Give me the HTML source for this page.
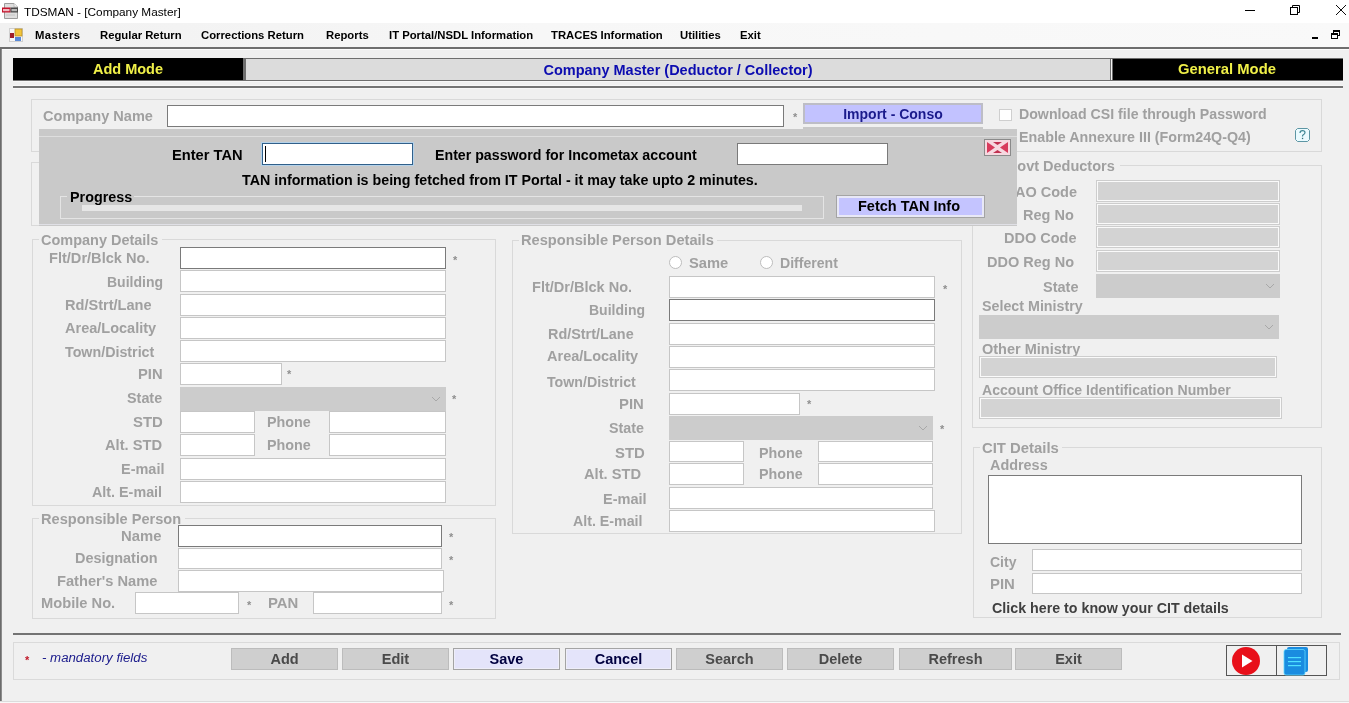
<!DOCTYPE html>
<html><head><meta charset="utf-8"><title>TDSMAN - [Company Master]</title>
<style>
html,body{margin:0;padding:0;}
body{width:1349px;height:703px;position:relative;overflow:hidden;background:#f0f0f0;font-family:"Liberation Sans", sans-serif;}
body>*{position:absolute;box-sizing:border-box;white-space:nowrap;}
span{display:block;will-change:transform;}
</style></head><body>
<div style="left:0px;top:0px;width:1349px;height:23px;background:#ffffff;"></div>
<svg style="left:1px;top:2px" width="18" height="18" viewBox="0 0 18 18"><path d="M3.5 1.5 H13 L16.5 5 V16.5 H3.5 Z" fill="#dedede" stroke="#9c9c9c" stroke-width="1"/><path d="M13 1.5 V5 H16.5" fill="#f4f4f4" stroke="#b0b0b0" stroke-width="0.8"/><rect x="1" y="5.5" width="8.5" height="5" fill="#c4142c"/><rect x="9.5" y="5.5" width="7.5" height="5" fill="#4a4a4a"/><rect x="2" y="7" width="6.5" height="2.2" fill="#f0b8c0"/><rect x="10.5" y="7" width="5.5" height="2.2" fill="#b8b8b8"/><rect x="5" y="12.5" width="9" height="1" fill="#c4c4c4"/></svg>
<span style="left:24px;top:4.9px;font-size:11.8px;line-height:14px;font-weight:400;color:#000000;">TDSMAN - [Company Master]</span>
<div style="left:1245px;top:10px;width:10px;height:1px;background:#000;"></div>
<svg style="left:1289px;top:4px" width="12" height="12"><rect x="1.5" y="3.5" width="7" height="7" fill="none" stroke="#000" stroke-width="1"/><path d="M3.5 3.5 V1.5 H10.5 V8.5 H8.5" fill="none" stroke="#000" stroke-width="1"/></svg>
<svg style="left:1335px;top:4px" width="12" height="12"><path d="M1 1 L11 11 M11 1 L1 11" stroke="#000" stroke-width="0.95"/></svg>
<div style="left:0px;top:23px;width:1349px;height:24px;background:linear-gradient(to right,#f1f1f1,#f7f7f7 40%,#f9f9f9);"></div>
<div style="left:0px;top:47px;width:1349px;height:2px;background:#6e6e6e;"></div>
<div style="left:2px;top:49px;width:1347px;height:1px;background:#fbfbfb;"></div>
<svg style="left:9px;top:28px" width="14" height="14" viewBox="0 0 14 14"><rect x="0.5" y="0.5" width="13" height="13" fill="#f8f8f8" stroke="#d0d0d0" stroke-width="1"/><rect x="6" y="1" width="7" height="7" fill="#f2c53a" stroke="#b89028" stroke-width="0.8"/><rect x="1" y="5" width="4" height="5" fill="#a0202c"/><rect x="6" y="9" width="6" height="4" fill="#5a8ad8"/></svg>
<span style="left:35px;top:27.3px;width:51px;font-size:11.3px;line-height:16px;font-weight:700;color:#000;letter-spacing:0.4px;">Masters</span>
<span style="left:100px;top:27.3px;width:87px;font-size:11.3px;line-height:16px;font-weight:700;color:#000;">Regular Return</span>
<span style="left:201px;top:27.3px;width:111px;font-size:11.3px;line-height:16px;font-weight:700;color:#000;">Corrections Return</span>
<span style="left:326px;top:27.3px;width:49px;font-size:11.3px;line-height:16px;font-weight:700;color:#000;">Reports</span>
<span style="left:389px;top:27.3px;width:148px;font-size:11.3px;line-height:16px;font-weight:700;color:#000;">IT Portal/NSDL Information</span>
<span style="left:551px;top:27.3px;width:115px;font-size:11.3px;line-height:16px;font-weight:700;color:#000;">TRACES Information</span>
<span style="left:680px;top:27.3px;width:46px;font-size:11.3px;line-height:16px;font-weight:700;color:#000;">Utilities</span>
<span style="left:740px;top:27.3px;width:25px;font-size:11.3px;line-height:16px;font-weight:700;color:#000;">Exit</span>
<div style="left:1312px;top:37px;width:6px;height:2px;background:#000;"></div>
<svg style="left:1330px;top:29px" width="12" height="12" shape-rendering="crispEdges"><rect x="3" y="1" width="7" height="2" fill="#000"/><rect x="9" y="1" width="1" height="6" fill="#000"/><rect x="8" y="6" width="2" height="1" fill="#000"/><rect x="3" y="3" width="1" height="1" fill="#000"/><rect x="1" y="4" width="7" height="2" fill="#000"/><rect x="1" y="4" width="1" height="6" fill="#000"/><rect x="7" y="4" width="1" height="6" fill="#000"/><rect x="1" y="9" width="7" height="1" fill="#000"/></svg>
<div style="left:0px;top:49px;width:1px;height:652px;background:#6c6c6c;"></div>
<div style="left:1px;top:49px;width:1px;height:652px;background:#8c8c8c;"></div>
<div style="left:0px;top:701px;width:1349px;height:1px;background:#dcdcdc;"></div>
<div style="left:0px;top:702px;width:1349px;height:1px;background:#f8f8f8;"></div>
<div style="left:13px;top:58px;width:1330px;height:23px;background:#6e6e6e;"></div>
<div style="left:13px;top:58px;width:230px;height:22px;background:#000000;"></div>
<div style="left:246px;top:59px;width:864px;height:21px;background:#dcdcdc;"></div>
<div style="left:1111px;top:59px;width:1px;height:21px;background:#f4f4f4;"></div>
<div style="left:1113px;top:59px;width:230px;height:21px;background:#000000;"></div>
<span style="left:13px;top:60.7px;width:230px;text-align:center;font-size:14.5px;line-height:17px;font-weight:700;color:#f0f048;">Add Mode</span>
<span style="left:246px;top:61.7px;width:864px;text-align:center;font-size:14.5px;line-height:17px;font-weight:700;color:#0c0cb0;">Company Master (Deductor / Collector)</span>
<span style="left:1113px;top:60.1px;width:228px;text-align:center;font-size:14.8px;line-height:18px;font-weight:700;color:#f0f048;">General Mode</span>
<div style="left:13px;top:81px;width:1330px;height:1px;background:#f8f8f8;"></div>
<div style="left:13px;top:85px;width:1330px;height:1px;background:#f7f7f7;"></div>
<div style="left:13px;top:86px;width:1330px;height:2px;background:#747474;"></div>
<div style="left:13px;top:88px;width:1330px;height:1px;background:#f7f7f7;"></div>
<div style="left:31px;top:99px;width:1291px;height:53px;background:transparent;border:1px solid #d9d9d9;"></div>
<span style="left:43px;top:107.5px;font-size:14.55px;line-height:17px;font-weight:700;color:#a0a0a0;">Company Name</span>
<div style="left:167px;top:105px;width:617px;height:22px;background:#ffffff;border:1px solid #7a7a7a;"></div>
<span style="left:792.8px;top:111.5px;font-size:11px;line-height:11px;font-weight:700;color:#8e8e8e">*</span>
<div style="left:803px;top:103px;width:180px;height:21px;background:#c2c2ff;border:2px solid #bdbdc6;"></div>
<span style="left:803px;top:105.9px;width:180px;text-align:center;font-size:14px;line-height:17px;font-weight:700;color:#1a1a8c;">Import - Conso</span>
<div style="left:999px;top:109px;width:13px;height:12px;background:#ffffff;border:1px solid #cfcfcf;"></div>
<span style="left:1019px;top:106.1px;font-size:14.17px;line-height:17px;font-weight:700;color:#a0a0a0;">Download CSI file through Password</span>
<span style="left:1019px;top:129.1px;font-size:14.28px;line-height:17px;font-weight:700;color:#a0a0a0;">Enable Annexure III (Form24Q-Q4)</span>
<svg style="left:1295px;top:128px" width="15" height="14"><path d="M2.5 0.5 H12.5 L14.5 2.5 V11.5 L12.5 13.5 H2.5 L0.5 11.5 V2.5 Z" fill="#eafbff" stroke="#5d96a4" stroke-width="1"/><path d="M5 5 Q5 2.6 7.5 2.6 Q10 2.6 10 4.6 Q10 6 8.3 6.8 Q7.5 7.2 7.5 8.6" fill="none" stroke="#3f8896" stroke-width="1.2"/><rect x="6.9" y="9.8" width="1.3" height="1.3" fill="#2f6f7a"/></svg>
<div style="left:31px;top:162px;width:934px;height:64px;background:transparent;border:1px solid #d9d9d9;"></div>
<div style="left:972px;top:165px;width:350px;height:263px;background:transparent;border:1px solid #d9d9d9;"></div>
<div style="left:1004px;top:164px;width:116px;height:3px;background:#f0f0f0;"></div>
<span style="left:1006px;top:158.0px;font-size:14.5px;line-height:17px;font-weight:700;color:#a0a0a0;">Govt Deductors</span>
<span style="right:272px;top:184.0px;text-align:right;font-size:14.5px;line-height:17px;font-weight:700;color:#a0a0a0;">AO Code</span>
<div style="left:1096px;top:180px;width:184px;height:22px;background:#d3d3d3;border:1px solid #cdcdcd;box-shadow:inset 0 0 0 1px #fafafa;"></div>
<span style="right:275px;top:207.0px;text-align:right;font-size:14.5px;line-height:17px;font-weight:700;color:#a0a0a0;">Reg No</span>
<div style="left:1096px;top:203px;width:184px;height:22px;background:#d3d3d3;border:1px solid #cdcdcd;box-shadow:inset 0 0 0 1px #fafafa;"></div>
<span style="right:273px;top:230.0px;text-align:right;font-size:14.5px;line-height:17px;font-weight:700;color:#a0a0a0;">DDO Code</span>
<div style="left:1096px;top:226px;width:184px;height:22px;background:#d3d3d3;border:1px solid #cdcdcd;box-shadow:inset 0 0 0 1px #fafafa;"></div>
<span style="right:275px;top:254.0px;text-align:right;font-size:14.5px;line-height:17px;font-weight:700;color:#a0a0a0;">DDO Reg No</span>
<div style="left:1096px;top:250px;width:184px;height:22px;background:#d3d3d3;border:1px solid #cdcdcd;box-shadow:inset 0 0 0 1px #fafafa;"></div>
<span style="right:271px;top:279.0px;text-align:right;font-size:14.5px;line-height:17px;font-weight:700;color:#a0a0a0;">State</span>
<div style="left:1096px;top:274px;width:184px;height:24px;background:#cccccc;"></div>
<svg style="left:1265px;top:283.0px" width="10" height="6"><path d="M1 1 L5 5 L9 1" stroke="#a8a8a8" stroke-width="1" fill="none"/></svg>
<span style="left:982px;top:298.1px;font-size:14.27px;line-height:17px;font-weight:700;color:#a0a0a0;">Select Ministry</span>
<div style="left:979px;top:315px;width:300px;height:24px;background:#cccccc;"></div>
<svg style="left:1264px;top:324.0px" width="10" height="6"><path d="M1 1 L5 5 L9 1" stroke="#a8a8a8" stroke-width="1" fill="none"/></svg>
<span style="left:982px;top:341.0px;font-size:14.5px;line-height:17px;font-weight:700;color:#a0a0a0;">Other Ministry</span>
<div style="left:979px;top:356px;width:298px;height:22px;background:#d3d3d3;border:1px solid #cdcdcd;box-shadow:inset 0 0 0 1px #fafafa;"></div>
<span style="left:982px;top:382.1px;font-size:14.08px;line-height:17px;font-weight:700;color:#a0a0a0;">Account Office Identification Number</span>
<div style="left:979px;top:397px;width:303px;height:22px;background:#d3d3d3;border:1px solid #cdcdcd;box-shadow:inset 0 0 0 1px #fafafa;"></div>
<div style="left:973px;top:447px;width:349px;height:171px;background:transparent;border:1px solid #d9d9d9;"></div>
<div style="left:980px;top:446px;width:82px;height:3px;background:#f0f0f0;"></div>
<span style="left:982px;top:439.4px;font-size:14.86px;line-height:18px;font-weight:700;color:#a0a0a0;">CIT Details</span>
<span style="left:990px;top:457.0px;font-size:14.42px;line-height:17px;font-weight:700;color:#a0a0a0;">Address</span>
<div style="left:988px;top:475px;width:314px;height:69px;background:#ffffff;border:1px solid #7a7a7a;"></div>
<span style="left:990px;top:554.1px;font-size:14.0px;line-height:17px;font-weight:700;color:#a0a0a0;">City</span>
<div style="left:1032px;top:549px;width:270px;height:22px;background:#ffffff;border:1px solid #c6c6c6;"></div>
<span style="left:990px;top:575.3px;font-size:14.9px;line-height:18px;font-weight:700;color:#a0a0a0;">PIN</span>
<div style="left:1032px;top:573px;width:270px;height:21px;background:#ffffff;border:1px solid #c6c6c6;"></div>
<span style="left:992px;top:599.6px;font-size:14.26px;line-height:17px;font-weight:700;color:#404040;">Click here to know your CIT details</span>
<div style="left:32px;top:239px;width:464px;height:267px;background:transparent;border:1px solid #d9d9d9;"></div>
<div style="left:38.5px;top:238px;width:123.0px;height:3px;background:#f0f0f0;"></div>
<span style="left:40.5px;top:232.0px;font-size:14.48px;line-height:17px;font-weight:700;color:#a0a0a0;">Company Details</span>
<span style="left:49px;top:249.4px;font-size:14.59px;line-height:18px;font-weight:700;color:#a0a0a0;">Flt/Dr/Blck No.</span>
<div style="left:180px;top:247px;width:266px;height:22px;background:#ffffff;border:1px solid #7a7a7a;"></div>
<span style="left:106.5px;top:273.6px;font-size:14.0px;line-height:17px;font-weight:700;color:#a0a0a0;">Building</span>
<div style="left:180px;top:270px;width:266px;height:22px;background:#ffffff;border:1px solid #c6c6c6;"></div>
<span style="left:65.4px;top:297.0px;font-size:14.57px;line-height:17px;font-weight:700;color:#a0a0a0;">Rd/Strt/Lane</span>
<div style="left:180px;top:294px;width:266px;height:22px;background:#ffffff;border:1px solid #c6c6c6;"></div>
<span style="left:65.4px;top:319.5px;font-size:14.52px;line-height:17px;font-weight:700;color:#a0a0a0;">Area/Locality</span>
<div style="left:180px;top:317px;width:266px;height:22px;background:#ffffff;border:1px solid #c6c6c6;"></div>
<span style="left:65.4px;top:344.1px;font-size:14.27px;line-height:17px;font-weight:700;color:#a0a0a0;">Town/District</span>
<div style="left:180px;top:340px;width:266px;height:22px;background:#ffffff;border:1px solid #c6c6c6;"></div>
<span style="left:138.4px;top:365.4px;font-size:14.76px;line-height:18px;font-weight:700;color:#a0a0a0;">PIN</span>
<div style="left:180px;top:363px;width:102px;height:22px;background:#ffffff;border:1px solid #c6c6c6;"></div>
<span style="left:121.4px;top:460.7px;font-size:14.49px;line-height:17px;font-weight:700;color:#a0a0a0;">E-mail</span>
<div style="left:180px;top:458px;width:266px;height:22px;background:#ffffff;border:1px solid #c6c6c6;"></div>
<span style="left:92px;top:484.0px;font-size:14.34px;line-height:17px;font-weight:700;color:#a0a0a0;">Alt. E-mail</span>
<div style="left:180px;top:481px;width:266px;height:22px;background:#ffffff;border:1px solid #c6c6c6;"></div>
<span style="left:452.8px;top:254.5px;font-size:11px;line-height:11px;font-weight:700;color:#8e8e8e">*</span>
<span style="left:287.4px;top:369.0px;font-size:11px;line-height:11px;font-weight:700;color:#8e8e8e">*</span>
<span style="left:126.6px;top:390.0px;font-size:14.39px;line-height:17px;font-weight:700;color:#a0a0a0;">State</span>
<div style="left:180px;top:387px;width:266px;height:24px;background:#cccccc;"></div>
<svg style="left:431px;top:396.0px" width="10" height="6"><path d="M1 1 L5 5 L9 1" stroke="#a8a8a8" stroke-width="1" fill="none"/></svg>
<span style="left:452.2px;top:394.0px;font-size:11px;line-height:11px;font-weight:700;color:#8e8e8e">*</span>
<span style="left:133.4px;top:413.3px;font-size:14.9px;line-height:18px;font-weight:700;color:#a0a0a0;">STD</span>
<div style="left:180px;top:411px;width:75px;height:22px;background:#ffffff;border:1px solid #c6c6c6;"></div>
<span style="left:267px;top:414.0px;font-size:14.33px;line-height:17px;font-weight:700;color:#a0a0a0;">Phone</span>
<div style="left:329px;top:411px;width:117px;height:22px;background:#ffffff;border:1px solid #c6c6c6;"></div>
<span style="left:105px;top:436.4px;font-size:14.68px;line-height:18px;font-weight:700;color:#a0a0a0;">Alt. STD</span>
<div style="left:180px;top:434px;width:75px;height:22px;background:#ffffff;border:1px solid #c6c6c6;"></div>
<span style="left:267px;top:437.0px;font-size:14.33px;line-height:17px;font-weight:700;color:#a0a0a0;">Phone</span>
<div style="left:329px;top:434px;width:117px;height:22px;background:#ffffff;border:1px solid #c6c6c6;"></div>
<div style="left:32px;top:518px;width:464px;height:101px;background:transparent;border:1px solid #d9d9d9;"></div>
<div style="left:38.5px;top:517px;width:146.0px;height:3px;background:#f0f0f0;"></div>
<span style="left:40.5px;top:510.9px;font-size:14.58px;line-height:17px;font-weight:700;color:#a0a0a0;">Responsible Person</span>
<span style="left:121.4px;top:526.9px;font-size:14.83px;line-height:18px;font-weight:700;color:#a0a0a0;">Name</span>
<div style="left:178px;top:525px;width:264px;height:22px;background:#ffffff;border:1px solid #7a7a7a;"></div>
<span style="left:449.4px;top:532.0px;font-size:11px;line-height:11px;font-weight:700;color:#8e8e8e">*</span>
<span style="left:75.4px;top:549.5px;font-size:14.43px;line-height:17px;font-weight:700;color:#a0a0a0;">Designation</span>
<div style="left:178px;top:548px;width:264px;height:21px;background:#ffffff;border:1px solid #c6c6c6;"></div>
<span style="left:449.4px;top:554.5px;font-size:11px;line-height:11px;font-weight:700;color:#8e8e8e">*</span>
<span style="left:56.5px;top:571.9px;font-size:14.67px;line-height:18px;font-weight:700;color:#a0a0a0;">Father's Name</span>
<div style="left:178px;top:570px;width:266px;height:22px;background:#ffffff;border:1px solid #c6c6c6;"></div>
<span style="left:40.7px;top:594.0px;font-size:14.68px;line-height:18px;font-weight:700;color:#a0a0a0;">Mobile No.</span>
<div style="left:135px;top:592px;width:104px;height:22px;background:#ffffff;border:1px solid #c6c6c6;"></div>
<span style="left:247.0px;top:600.0px;font-size:11px;line-height:11px;font-weight:700;color:#8e8e8e">*</span>
<span style="left:268px;top:593.9px;font-size:14.9px;line-height:18px;font-weight:700;color:#a0a0a0;">PAN</span>
<div style="left:313px;top:592px;width:129px;height:22px;background:#ffffff;border:1px solid #c6c6c6;"></div>
<span style="left:449.4px;top:599.5px;font-size:11px;line-height:11px;font-weight:700;color:#8e8e8e">*</span>
<div style="left:512px;top:240px;width:450px;height:294px;background:transparent;border:1px solid #d9d9d9;"></div>
<div style="left:518.7px;top:239px;width:198.0px;height:3px;background:#f0f0f0;"></div>
<span style="left:520.7px;top:231.4px;font-size:14.65px;line-height:18px;font-weight:700;color:#a0a0a0;">Responsible Person Details</span>
<svg style="left:669px;top:256px" width="14" height="14"><circle cx="6.5" cy="6.5" r="6" fill="#fff" stroke="#bdbdbd" stroke-width="1"/></svg>
<span style="left:688.5px;top:254.4px;font-size:14.72px;line-height:18px;font-weight:700;color:#a0a0a0;">Same</span>
<svg style="left:760px;top:256px" width="14" height="14"><circle cx="6.5" cy="6.5" r="6" fill="#fff" stroke="#bdbdbd" stroke-width="1"/></svg>
<span style="left:779.5px;top:255.1px;font-size:14.08px;line-height:17px;font-weight:700;color:#a0a0a0;">Different</span>
<span style="left:531.5px;top:278.6px;font-size:14.54px;line-height:17px;font-weight:700;color:#a0a0a0;">Flt/Dr/Blck No.</span>
<div style="left:669px;top:276px;width:266px;height:22px;background:#ffffff;border:1px solid #c6c6c6;"></div>
<span style="left:588.7px;top:301.7px;font-size:14.0px;line-height:17px;font-weight:700;color:#a0a0a0;">Building</span>
<div style="left:669px;top:299px;width:266px;height:22px;background:#ffffff;border:1px solid #7a7a7a;"></div>
<span style="left:547.7px;top:326.4px;font-size:14.42px;line-height:17px;font-weight:700;color:#a0a0a0;">Rd/Strt/Lane</span>
<div style="left:669px;top:323px;width:266px;height:22px;background:#ffffff;border:1px solid #c6c6c6;"></div>
<span style="left:547.3px;top:347.8px;font-size:14.52px;line-height:17px;font-weight:700;color:#a0a0a0;">Area/Locality</span>
<div style="left:669px;top:346px;width:266px;height:22px;background:#ffffff;border:1px solid #c6c6c6;"></div>
<span style="left:546.8px;top:373.5px;font-size:14.19px;line-height:17px;font-weight:700;color:#a0a0a0;">Town/District</span>
<div style="left:669px;top:369px;width:266px;height:22px;background:#ffffff;border:1px solid #c6c6c6;"></div>
<span style="left:619.4px;top:394.9px;font-size:14.88px;line-height:18px;font-weight:700;color:#a0a0a0;">PIN</span>
<div style="left:669px;top:393px;width:131px;height:22px;background:#ffffff;border:1px solid #c6c6c6;"></div>
<span style="left:602.5px;top:490.7px;font-size:14.56px;line-height:17px;font-weight:700;color:#a0a0a0;">E-mail</span>
<div style="left:669px;top:487px;width:264px;height:22px;background:#ffffff;border:1px solid #c6c6c6;"></div>
<span style="left:573.2px;top:512.8px;font-size:14.23px;line-height:17px;font-weight:700;color:#a0a0a0;">Alt. E-mail</span>
<div style="left:669px;top:510px;width:266px;height:22px;background:#ffffff;border:1px solid #c6c6c6;"></div>
<span style="left:942.8px;top:283.5px;font-size:11px;line-height:11px;font-weight:700;color:#8e8e8e">*</span>
<span style="left:807.2px;top:398.5px;font-size:11px;line-height:11px;font-weight:700;color:#8e8e8e">*</span>
<span style="left:608.6px;top:420.0px;font-size:14.31px;line-height:17px;font-weight:700;color:#a0a0a0;">State</span>
<div style="left:669px;top:416px;width:264px;height:24px;background:#cccccc;"></div>
<svg style="left:918px;top:425.0px" width="10" height="6"><path d="M1 1 L5 5 L9 1" stroke="#a8a8a8" stroke-width="1" fill="none"/></svg>
<span style="left:940.4px;top:423.5px;font-size:11px;line-height:11px;font-weight:700;color:#8e8e8e">*</span>
<span style="left:614.6px;top:443.9px;font-size:14.9px;line-height:18px;font-weight:700;color:#a0a0a0;">STD</span>
<div style="left:669px;top:441px;width:75px;height:21px;background:#ffffff;border:1px solid #c6c6c6;"></div>
<span style="left:759.3px;top:444.7px;font-size:14.27px;line-height:17px;font-weight:700;color:#a0a0a0;">Phone</span>
<div style="left:818px;top:441px;width:115px;height:21px;background:#ffffff;border:1px solid #c6c6c6;"></div>
<span style="left:584.3px;top:465.4px;font-size:14.68px;line-height:18px;font-weight:700;color:#a0a0a0;">Alt. STD</span>
<div style="left:669px;top:463px;width:75px;height:22px;background:#ffffff;border:1px solid #c6c6c6;"></div>
<span style="left:759.3px;top:466.1px;font-size:14.27px;line-height:17px;font-weight:700;color:#a0a0a0;">Phone</span>
<div style="left:818px;top:463px;width:115px;height:22px;background:#ffffff;border:1px solid #c6c6c6;"></div>
<div style="left:803px;top:127px;width:180px;height:3px;background:#c8c8c8;"></div>
<div style="left:39px;top:129px;width:978px;height:97px;background:#c9c9c9;"></div>
<div style="left:39px;top:136px;width:978px;height:1px;background:#dedede;"></div>
<div style="left:39px;top:224px;width:978px;height:1px;background:#e0e0e6;"></div>
<span style="left:171.5px;top:146.3px;font-size:14.66px;line-height:18px;font-weight:700;color:#000000;">Enter TAN</span>
<div style="left:262px;top:143px;width:151px;height:22px;background:#ffffff;border:1px solid #31608a;box-shadow:0 0 0 1px #b4d2ea;"></div>
<div style="left:265px;top:146px;width:1px;height:16px;background:#000000;"></div>
<span style="left:435px;top:147.0px;font-size:14.2px;line-height:17px;font-weight:700;color:#000000;">Enter password for Incometax account</span>
<div style="left:737px;top:143px;width:151px;height:22px;background:#ffffff;border:1px solid #7a7a7a;"></div>
<span style="left:242px;top:171.6px;font-size:14.27px;line-height:17px;font-weight:700;color:#000000;">TAN information is being fetched from IT Portal - it may take upto 2 minutes.</span>
<div style="left:60px;top:196px;width:764px;height:23px;background:transparent;border:1px solid #e4e4e4;"></div>
<div style="left:67px;top:194px;width:67px;height:5px;background:#c9c9c9;"></div>
<span style="left:69.7px;top:188.5px;font-size:14.34px;line-height:17px;font-weight:700;color:#000000;">Progress</span>
<div style="left:82px;top:205px;width:720px;height:6px;background:#e6e6e6;"></div>
<div style="left:836px;top:195px;width:149px;height:23px;background:#c4c4ff;border:1px solid #a4a4a4;box-shadow:inset 0 0 0 2px #e8e8f6;"></div>
<span style="left:835px;top:197.7px;width:148px;text-align:center;font-size:14.5px;line-height:17px;font-weight:700;color:#000000;">Fetch TAN Info</span>
<svg style="left:984px;top:139px" width="27" height="17" viewBox="0 0 27 17"><rect x="0.5" y="0.5" width="26" height="16" fill="#f6d8e0" stroke="#8a8a8a" stroke-width="1"/><path d="M3 3 L11 8.5 L3 14 Z" fill="#d83a5c"/><path d="M24 3 L16 8.5 L24 14 Z" fill="#d83a5c"/><path d="M9 3 L18 3 L13.5 6 Z" fill="#c03050"/><path d="M9 14 L18 14 L13.5 11 Z" fill="#c03050"/></svg>
<div style="left:13px;top:633px;width:1328px;height:2px;background:#737373;"></div>
<div style="left:13px;top:642px;width:1327px;height:38px;background:transparent;border:1px solid #dadada;"></div>
<span style="left:25px;top:654px;font-size:11px;line-height:12px;font-weight:700;color:#c01828">*</span>
<span style="left:42.3px;top:649.8px;font-size:13.25px;line-height:16px;font-weight:400;color:#20208e;font-style:italic;">- mandatory fields</span>
<div style="left:231px;top:648px;width:107px;height:22px;background:#cfcfcf;border:1px solid #bcbcbc;"></div>
<span style="left:231px;top:650.7px;width:107px;text-align:center;font-size:14.5px;line-height:17px;font-weight:700;color:#4a4a4a;">Add</span>
<div style="left:342px;top:648px;width:107px;height:22px;background:#cfcfcf;border:1px solid #bcbcbc;"></div>
<span style="left:342px;top:650.7px;width:107px;text-align:center;font-size:14.5px;line-height:17px;font-weight:700;color:#4a4a4a;">Edit</span>
<div style="left:453px;top:648px;width:107px;height:22px;background:#e4e4fa;border:1px solid #a4a4a4;box-shadow:inset 0 0 0 1px #eeeef8;"></div>
<span style="left:453px;top:650.7px;width:107px;text-align:center;font-size:14.5px;line-height:17px;font-weight:700;color:#000040;">Save</span>
<div style="left:565px;top:648px;width:107px;height:22px;background:#e4e4fa;border:1px solid #a4a4a4;box-shadow:inset 0 0 0 1px #eeeef8;"></div>
<span style="left:565px;top:650.7px;width:107px;text-align:center;font-size:14.5px;line-height:17px;font-weight:700;color:#000040;">Cancel</span>
<div style="left:676px;top:648px;width:107px;height:22px;background:#cfcfcf;border:1px solid #bcbcbc;"></div>
<span style="left:676px;top:650.7px;width:107px;text-align:center;font-size:14.5px;line-height:17px;font-weight:700;color:#4a4a4a;">Search</span>
<div style="left:787px;top:648px;width:107px;height:22px;background:#cfcfcf;border:1px solid #bcbcbc;"></div>
<span style="left:787px;top:650.7px;width:107px;text-align:center;font-size:14.5px;line-height:17px;font-weight:700;color:#4a4a4a;">Delete</span>
<div style="left:899px;top:648px;width:113px;height:22px;background:#cfcfcf;border:1px solid #bcbcbc;"></div>
<span style="left:899px;top:650.7px;width:113px;text-align:center;font-size:14.5px;line-height:17px;font-weight:700;color:#4a4a4a;">Refresh</span>
<div style="left:1015px;top:648px;width:107px;height:22px;background:#cfcfcf;border:1px solid #bcbcbc;"></div>
<span style="left:1015px;top:650.7px;width:107px;text-align:center;font-size:14.5px;line-height:17px;font-weight:700;color:#4a4a4a;">Exit</span>
<div style="left:1226px;top:645px;width:101px;height:31px;background:transparent;border:1px solid #555555;"></div>
<div style="left:1276px;top:645px;width:1px;height:31px;background:#555555;"></div>
<svg style="left:1230px;top:645px" width="32" height="31"><circle cx="16" cy="16" r="14" fill="#e8101a"/><path d="M12 9.5 L22.5 16 L12 22.5 Z" fill="#ffffff"/></svg>
<svg style="left:1282px;top:645px" width="28" height="31" viewBox="0 0 28 31"><rect x="5" y="2" width="21" height="25" rx="2" fill="#1a8ce0"/><rect x="2" y="4.5" width="21" height="25.5" rx="2" fill="#1a8ce0" stroke="#60d8ff" stroke-width="0.8"/><rect x="6" y="12" width="13" height="1.2" fill="#50e0ff"/><rect x="6" y="16" width="13" height="1.2" fill="#50e0ff"/><rect x="6" y="20" width="13" height="1.2" fill="#50e0ff"/></svg>
</body></html>
